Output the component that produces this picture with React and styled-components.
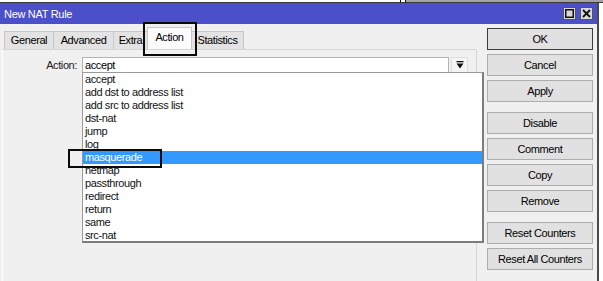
import React from "react";
import styled, { createGlobalStyle } from "styled-components";

const Global = createGlobalStyle`
  html, body { margin: 0; padding: 0; background: #ffffff; overflow: hidden; }
  body { font-family: "Liberation Sans", Arial, sans-serif; font-size: 11px; letter-spacing: -0.4px; color: #000; }
`;

const Page = styled.div`
  position: relative;
  width: 603px;
  height: 281px;
  background: #ffffff;
`;

const TopStrip = styled.div`
  display: flex;
  height: 3px;
`;

const StripPart = styled.div`
  height: 2px;
  width: ${(p) => p.$w}px;
  flex: ${(p) => (p.$grow ? 1 : "none")};
  background: ${(p) => p.$bg};
  border-bottom: 1px solid #3a3a3a;
  border-left: ${(p) => (p.$edge ? "1px solid #111" : "none")};
`;

const Window = styled.div`
  width: 597px;
  height: 278px;
  background: #f0f0f0;
  border-right: 2px solid #4a4a4a;
  display: flex;
  flex-direction: column;
`;

const TitleBar = styled.div`
  height: 21px;
  background: #4b4fc9;
  color: #ffffff;
  display: flex;
  align-items: center;
  padding: 0 4px 0 4px;
  letter-spacing: -0.3px;
`;

const Title = styled.div`
  flex: 1;
  padding-top: 1px;
`;

const WinButton = styled.div`
  width: 11px;
  height: 11px;
  margin-left: 4px;
  background: #d9d9d9;
  border: 1px solid #555;
  display: flex;
  align-items: center;
  justify-content: center;
`;

const Body = styled.div`
  flex: 1;
  display: flex;
`;

const Main = styled.div`
  width: 475px;
  padding-left: 2px;
  display: flex;
  flex-direction: column;
`;

const TabStrip = styled.div`
  height: 25px;
  display: flex;
  align-items: flex-end;
  padding-left: 2px;
`;

const Tab = styled.div`
  box-sizing: border-box;
  width: ${(p) => p.$w}px;
  height: ${(p) => (p.$active ? 22 : 18)}px;
  padding-top: ${(p) => (p.$active ? 3 : 2)}px;
  background: ${(p) => (p.$active ? "#fbfbfb" : "#e3e3e3")};
  border: 1px solid #c8c8c8;
  border-bottom: none;
  margin-left: ${(p) => (p.$first ? 0 : -1)}px;
  text-align: center;
  position: relative;
  z-index: ${(p) => (p.$active ? 2 : 1)};
  white-space: nowrap;
  overflow: hidden;
`;

const Panel = styled.div`
  flex: 1;
  background: #f0f0f0;
  border-top: 1px solid #d6d6d6;
  border-left: 1px solid #ffffff;
  border-right: 1px solid #d6d6d6;
  padding-top: 7px;
`;

const FieldRow = styled.div`
  display: flex;
  align-items: center;
  height: 16px;
`;

const Label = styled.div`
  width: 74px;
  text-align: right;
  margin-right: 5px;
  color: #222;
`;

const Input = styled.div`
  box-sizing: border-box;
  width: 367px;
  height: 16px;
  background: #ffffff;
  border: 1px solid #b4b4b4;
  padding-left: 2px;
  line-height: 14px;
`;

const ArrowButton = styled.div`
  box-sizing: border-box;
  width: 17px;
  height: 16px;
  margin-left: 2px;
  background: #f5f5f5;
  border: 1px solid #e0e0e0;
  display: flex;
  align-items: center;
  justify-content: center;
`;

const ButtonColumn = styled.div`
  flex: 1;
  display: flex;
  flex-direction: column;
  gap: 4px;
  padding: 4px 4px 0 10px;
`;

const Button = styled.div`
  box-sizing: border-box;
  height: 22px;
  width: 106px;
  background: #e1e1e1;
  border: 1px solid ${(p) => (p.$default ? "#3c3c3c" : "#adadad")};
  display: flex;
  align-items: center;
  justify-content: center;
  margin-top: ${(p) => (p.$sep ? 6 : 0)}px;
`;

const DropList = styled.div`
  position: absolute;
  left: 82px;
  top: 72px;
  width: 399px;
  height: 168px;
  background: #ffffff;
  border: 1px solid #9a9a9a;
  border-right: 2px solid #7c7c7c;
  border-bottom: 2px solid #7c7c7c;
  z-index: 5;
`;

const Item = styled.div`
  height: 13px;
  line-height: 13px;
  padding-left: 2px;
  background: ${(p) => (p.$selected ? "#3399ff" : "transparent")};
  color: ${(p) => (p.$selected ? "#ffffff" : "#111")};
`;

const Mark = styled.div`
  position: absolute;
  left: ${(p) => p.$x}px;
  top: ${(p) => p.$y}px;
  width: ${(p) => p.$w}px;
  height: ${(p) => p.$h}px;
  box-sizing: border-box;
  border: 2px solid #0a0a0a;
  z-index: 10;
`;

const tabs = [
  { label: "General", w: 50 },
  { label: "Advanced", w: 61 },
  { label: "Extra", w: 35 },
  { label: "Action", w: 45, active: true },
  { label: "Statistics", w: 53 },
];

const items = [
  "accept",
  "add dst to address list",
  "add src to address list",
  "dst-nat",
  "jump",
  "log",
  "masquerade",
  "netmap",
  "passthrough",
  "redirect",
  "return",
  "same",
  "src-nat",
];

const buttons = [
  { label: "OK", def: true },
  { label: "Cancel" },
  { label: "Apply" },
  { label: "Disable", sep: true },
  { label: "Comment" },
  { label: "Copy" },
  { label: "Remove" },
  { label: "Reset Counters", sep: true },
  { label: "Reset All Counters" },
];

export default function App() {
  return (
    <Page>
      <Global />
      <TopStrip>
        <StripPart $w={400} $bg="#ffffff" />
        <StripPart $w={4} $bg="#ffffff" $edge />
        <StripPart $grow $bg="#a4a4a4" $edge />
      </TopStrip>
      <Window>
        <TitleBar>
          <Title>New NAT Rule</Title>
          <WinButton>
            <svg width="9" height="9" viewBox="0 0 9 9">
              <rect x="0.75" y="0.75" width="7.5" height="7.5" fill="none" stroke="#111" strokeWidth="1.5" />
            </svg>
          </WinButton>
          <WinButton>
            <svg width="9" height="9" viewBox="0 0 9 9">
              <path d="M1 1 L8 8 M8 1 L1 8" stroke="#111" strokeWidth="1.8" />
            </svg>
          </WinButton>
        </TitleBar>
        <Body>
          <Main>
            <TabStrip>
              {tabs.map((t, i) => (
                <Tab key={t.label} $w={t.w} $active={t.active} $first={i === 0}>
                  {t.label}
                </Tab>
              ))}
            </TabStrip>
            <Panel>
              <FieldRow>
                <Label>Action:</Label>
                <Input>accept</Input>
                <ArrowButton>
                  <svg width="8" height="8" viewBox="0 0 8 8">
                    <rect x="0.5" y="0" width="7" height="1.3" fill="#111" />
                    <path d="M0.5 2.5 H7.5 L4 7.5 Z" fill="#111" />
                  </svg>
                </ArrowButton>
              </FieldRow>
            </Panel>
          </Main>
          <ButtonColumn>
            {buttons.map((b) => (
              <Button key={b.label} $default={b.def} $sep={b.sep}>
                {b.label}
              </Button>
            ))}
          </ButtonColumn>
        </Body>
      </Window>
      <DropList>
        {items.map((it) => (
          <Item key={it} $selected={it === "masquerade"}>
            {it}
          </Item>
        ))}
      </DropList>
      <Mark $x={143} $y={22} $w={54} $h={34} />
      <Mark $x={68} $y={149} $w={94} $h={19} />
    </Page>
  );
}
